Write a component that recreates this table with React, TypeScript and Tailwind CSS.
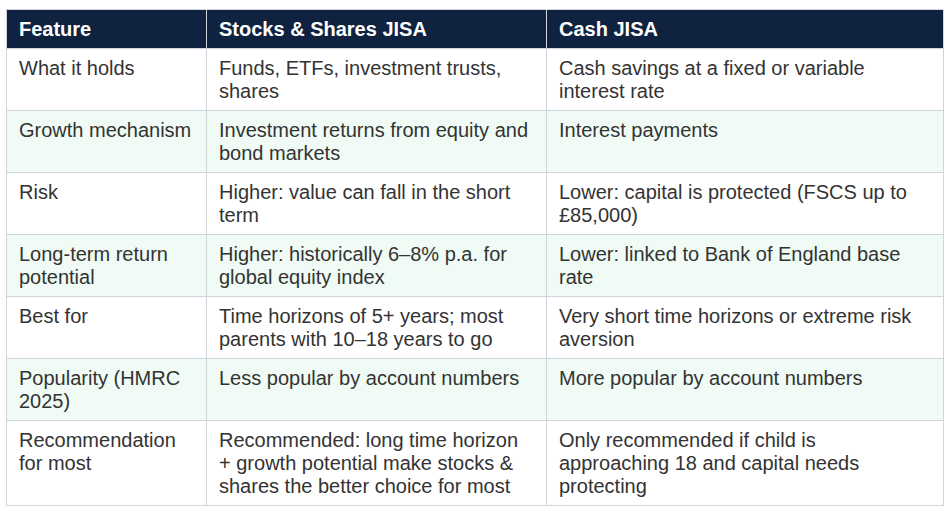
const rows: [string, string, string][] = [
  ["What it holds", "Funds, ETFs, investment trusts, shares", "Cash savings at a fixed or variable interest rate"],
  ["Growth mechanism", "Investment returns from equity and bond markets", "Interest payments"],
  ["Risk", "Higher: value can fall in the short term", "Lower: capital is protected (FSCS up to £85,000)"],
  ["Long-term return potential", "Higher: historically 6–8% p.a. for global equity index", "Lower: linked to Bank of England base rate"],
  ["Best for", "Time horizons of 5+ years; most parents with 10–18 years to go", "Very short time horizons or extreme risk aversion"],
  ["Popularity (HMRC 2025)", "Less popular by account numbers", "More popular by account numbers"],
  [
    "Recommendation for most",
    "Recommended: long time horizon + growth potential make stocks & shares the better choice for most",
    "Only recommended if child is approaching 18 and capital needs protecting",
  ],
];

export default function App() {
  return (
    <div className="bg-white w-[951px] h-[511px] pt-[9px] pl-[6px] font-['Liberation_Sans',Arial,sans-serif]">
      <table className="w-[937px] border-collapse table-fixed text-[20px] leading-[23px] text-[#333333]">
        <colgroup>
          <col className="w-[200px]" />
          <col className="w-[340px]" />
          <col className="w-[397px]" />
        </colgroup>
        <thead>
          <tr className="bg-[#0f2341] text-white font-bold text-left">
            <th className="border border-[#d0d5dd] px-3 pt-2 pb-[7px]">Feature</th>
            <th className="border border-[#d0d5dd] px-3 pt-2 pb-[7px]">Stocks &amp; Shares JISA</th>
            <th className="border border-[#d0d5dd] px-3 pt-2 pb-[7px]">Cash JISA</th>
          </tr>
        </thead>
        <tbody>
          {rows.map((r, i) => (
            <tr key={r[0]} className={i % 2 === 1 ? "bg-[#effbf4]" : "bg-white"}>
              {r.map((c, j) => (
                <td key={j} className="border border-[#d0d5dd] px-3 pt-2 pb-[7px] align-top">
                  {c}
                </td>
              ))}
            </tr>
          ))}
        </tbody>
      </table>
    </div>
  );
}
